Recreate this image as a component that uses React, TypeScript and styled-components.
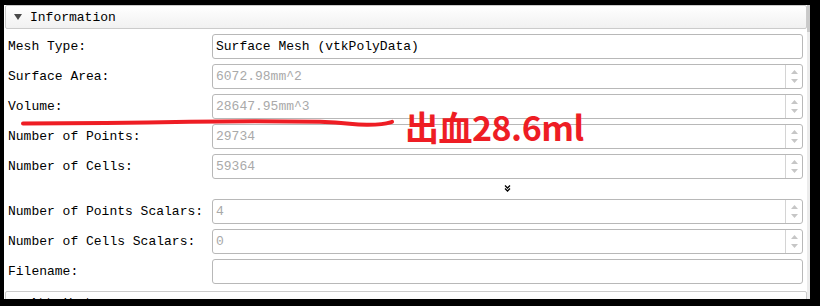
import React from "react";
import styled, { createGlobalStyle } from "styled-components";

const GlobalStyle = createGlobalStyle`
  html, body { margin: 0; padding: 0; width: 820px; height: 306px; overflow: hidden; background: #000; }
  #root { width: 820px; height: 306px; }
`;

const Frame = styled.div`
  position: relative;
  box-sizing: border-box;
  width: 820px;
  height: 306px;
  padding: 5px 10px 7px 4px;
  background: #000;
`;

const Panel = styled.div`
  display: flex;
  width: 806px;
  height: 294px;
  background: #fff;
  overflow: hidden;
`;

const Content = styled.div`
  display: flex;
  flex-direction: column;
  width: 803px;
  flex: none;
`;

const ScrollTrack = styled.div`
  width: 3px;
  flex: none;
  display: flex;
  flex-direction: column;
  background: #ececec;
`;

const ScrollThumb = styled.div`
  height: 27px;
  background: #c9c9c9;
`;

const SectionHeader = styled.div<{ $gap?: number }>`
  box-sizing: border-box;
  display: flex;
  align-items: center;
  gap: 8px;
  flex: none;
  margin: ${(p) => p.$gap ?? 0}px 0 0 1px;
  width: 802px;
  height: 24px;
  padding-left: 8px;
  border: 1px solid #cbcbcb;
  border-radius: 2px;
  background: linear-gradient(#ffffff, #f1f1f1);
  font-family: "Liberation Mono", "DejaVu Sans Mono", monospace;
  font-size: 13px;
  color: #000;
`;

const Caret = styled.svg`
  width: 8px;
  height: 6px;
  flex: none;
  margin-top: -1px;
`;

const Form = styled.div`
  display: grid;
  grid-template-columns: 204px 591px;
  grid-template-rows: repeat(5, 25px) 10px repeat(3, 25px);
  row-gap: 5px;
  flex: none;
  padding: 5px 4px 0 4px;
  font-family: "Liberation Mono", "DejaVu Sans Mono", monospace;
  font-size: 13px;
`;

const Label = styled.div`
  display: flex;
  align-items: center;
  color: #000;
  white-space: nowrap;
`;

const Field = styled.div<{ $disabled?: boolean }>`
  box-sizing: border-box;
  display: flex;
  align-items: stretch;
  height: 25px;
  border: 1px solid #b8b8b8;
  border-radius: 3px;
  background: #fff;
  color: ${(p) => (p.$disabled ? "#a9a9a9" : "#000")};
  overflow: hidden;
`;

const FieldText = styled.div`
  flex: 1;
  display: flex;
  align-items: center;
  padding-left: 3px;
  white-space: nowrap;
`;

const Spinner = styled.div`
  width: 16px;
  flex: none;
  display: flex;
  flex-direction: column;
  align-items: center;
  justify-content: center;
  gap: 5px;
  border-left: 1px solid #d4d4d4;
`;

const Arrow = styled.svg`
  width: 7px;
  height: 4px;
  display: block;
`;

const ExpanderRow = styled.div`
  grid-column: 2;
  height: 10px;
  display: flex;
  justify-content: center;
  align-items: flex-start;
`;

const Expander = styled.svg`
  width: 7px;
  height: 7px;
  margin-top: 1px;
  margin-left: -1px;
`;

const Overlay = styled.svg`
  position: absolute;
  left: 0;
  top: 0;
  width: 820px;
  height: 306px;
  pointer-events: none;
`;

const Note = styled.div`
  position: absolute;
  left: 405px;
  top: 110px;
  font-family: "Noto Sans CJK SC", "Noto Sans", sans-serif;
  font-weight: 700;
  font-size: 34px;
  line-height: 34px;
  letter-spacing: -0.5px;
  color: #ee1d24;
  white-space: nowrap;
`;

type Row = { label: string; value: string; disabled?: boolean; spin?: boolean };

const rowsTop: Row[] = [
  { label: "Mesh Type:", value: "Surface Mesh (vtkPolyData)" },
  { label: "Surface Area:", value: "6072.98mm^2", disabled: true, spin: true },
  { label: "Volume:", value: "28647.95mm^3", disabled: true, spin: true },
  { label: "Number of Points:", value: "29734", disabled: true, spin: true },
  { label: "Number of Cells:", value: "59364", disabled: true, spin: true },
];

const rowsBottom: Row[] = [
  { label: "Number of Points Scalars:", value: "4", disabled: true, spin: true },
  { label: "Number of Cells Scalars:", value: "0", disabled: true, spin: true },
  { label: "Filename:", value: "" },
];

function SpinArrows() {
  return (
    <Spinner>
      <Arrow viewBox="0 0 7 4">
        <path d="M3.5 0 L7 4 L0 4 Z" fill="#c6c6c6" />
      </Arrow>
      <Arrow viewBox="0 0 7 4">
        <path d="M0 0 L7 0 L3.5 4 Z" fill="#c6c6c6" />
      </Arrow>
    </Spinner>
  );
}

function FormRow({ row }: { row: Row }) {
  return (
    <>
      <Label>{row.label}</Label>
      <Field $disabled={row.disabled}>
        <FieldText>{row.value}</FieldText>
        {row.spin && <SpinArrows />}
      </Field>
    </>
  );
}

export default function App() {
  return (
    <>
      <GlobalStyle />
      <Frame>
        <Panel>
          <Content>
            <SectionHeader>
              <Caret viewBox="0 0 8 6">
                <path d="M0 0 L8 0 L4 6 Z" fill="#4a4a4a" />
              </Caret>
              <span>Information</span>
            </SectionHeader>
            <Form>
              {rowsTop.map((r) => (
                <FormRow key={r.label} row={r} />
              ))}
              <ExpanderRow>
                <Expander viewBox="0 0 7 7">
                  <path d="M1 0.5 L3.5 3 L6 0.5 M1 3.5 L3.5 6 L6 3.5" stroke="#000" strokeWidth="1.3" fill="none" />
                </Expander>
              </ExpanderRow>
              {rowsBottom.map((r) => (
                <FormRow key={r.label} row={r} />
              ))}
            </Form>
            <SectionHeader $gap={7}>
              <Caret viewBox="0 0 8 6">
                <path d="M0 0 L8 0 L4 6 Z" fill="#4a4a4a" />
              </Caret>
              <span>Attributes</span>
            </SectionHeader>
          </Content>
          <ScrollTrack>
            <ScrollThumb />
          </ScrollTrack>
        </Panel>
        <Overlay viewBox="0 0 820 306">
          <path
            d="M23 123.5 C 80 123.5, 140 122.8, 190 121.8 S 290 121.2, 320 121.8 S 350 125, 368 124.8 S 388 123, 392 121.8"
            stroke="#ee1d24"
            strokeWidth="4"
            strokeLinecap="round"
            fill="none"
          />
        </Overlay>
        <Note>出血28.6ml</Note>
      </Frame>
    </>
  );
}
